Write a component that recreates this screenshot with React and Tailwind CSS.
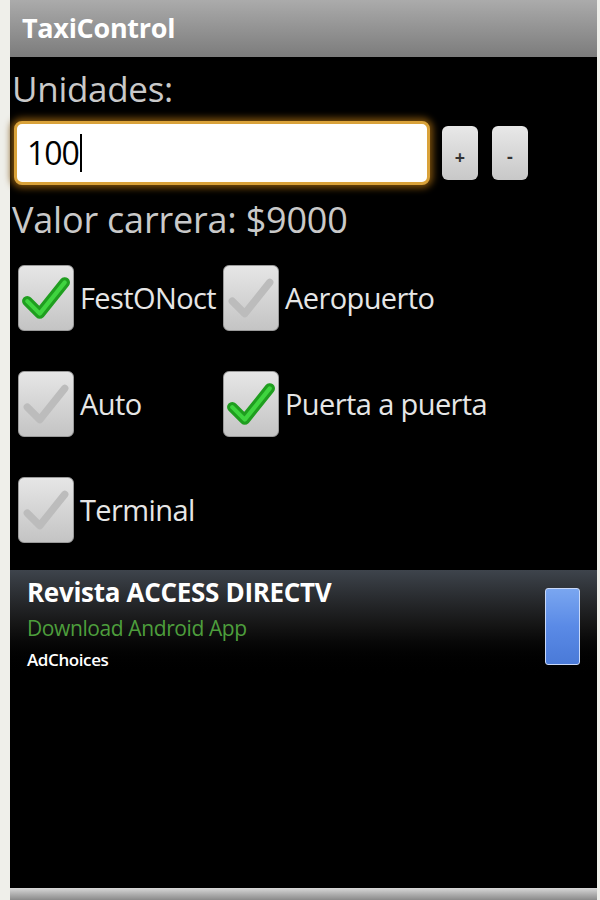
import { useState } from "react";

function Check({ on }) {
  return (
    <div className="w-[56px] h-[66px] rounded-[6px] bg-gradient-to-b from-[#e6e6e6] to-[#c4c4c4] border border-[#9a9a9a] flex items-center justify-center shrink-0">
      <svg width="50" height="46" viewBox="0 0 48 44">
        <path
          d="M6 25 L18 37 L42 7"
          fill="none"
          stroke={on ? "#1f9e1f" : "#bcbcbc"}
          strokeWidth={on ? 10 : 7}
          strokeLinecap="round"
          strokeLinejoin="round"
        />
        {on && (
          <path d="M6 25 L18 37 L42 7" fill="none" stroke="#3fd43f" strokeWidth="4" strokeLinecap="round" strokeLinejoin="round" />
        )}
      </svg>
    </div>
  );
}

function Option({ label, on, width }) {
  return (
    <div className={"flex items-center gap-[6px] " + (width || "")}>
      <Check on={on} />
      <span className="text-[29px] text-[#e6e6e6] tracking-[-0.6px]">{label}</span>
    </div>
  );
}

export default function App() {
  const [units, setUnits] = useState(100);

  return (
    <div className="w-[600px] h-[900px] bg-[#efefea] flex" style={{ fontFamily: '"Open Sans", "Noto Sans", sans-serif' }}>
      <div className="ml-[10px] w-[587px] h-full bg-black flex flex-col">
        {/* Title bar */}
        <div className="h-[57px] bg-gradient-to-b from-[#ababab] to-[#7c7c7c] flex items-center px-[12px] shrink-0">
          <span className="text-[27px] font-bold text-white tracking-[-0.3px]">TaxiControl</span>
        </div>

        <div className="pl-[2px] pt-[10px] text-[35px] text-[#c9c9c9] leading-[44px] tracking-[-0.3px]">Unidades:</div>

        {/* Input row */}
        <div className="flex items-center mt-[10px] pl-[4px]">
          <div className="w-[416px] h-[64px] rounded-[8px] bg-white border-[3px] border-[#d9a23a] shadow-[0_0_7px_3px_#7a4e0c] flex items-center px-[10px]">
            <span className="text-[32px] text-black tracking-[-1px]">{units}</span>
            <span className="w-[2px] h-[38px] bg-black ml-[1px]" />
          </div>
          <button
            onClick={() => setUnits((u) => u + 1)}
            className="ml-[12px] w-[36px] h-[54px] rounded-[6px] bg-gradient-to-b from-[#e8e8e8] to-[#c8c8c8] text-[#333] text-[18px] font-bold flex items-center justify-center pt-[8px]"
          >
            +
          </button>
          <button
            onClick={() => setUnits((u) => u - 1)}
            className="ml-[14px] w-[36px] h-[54px] rounded-[6px] bg-gradient-to-b from-[#e8e8e8] to-[#c8c8c8] text-[#333] text-[18px] font-bold flex items-center justify-center pt-[6px]"
          >
            -
          </button>
        </div>

        <div className="pl-[2px] mt-[12px] text-[36px] text-[#c9c9c9] leading-[46px] tracking-[-0.2px]">Valor carrera: ${units * 90}</div>

        {/* Options */}
        <div className="flex flex-col gap-[40px] mt-[22px] pl-[8px]">
          <div className="flex">
            <Option label="FestONoct" on width="w-[205px]" />
            <Option label="Aeropuerto" />
          </div>
          <div className="flex">
            <Option label="Auto" width="w-[205px]" />
            <Option label="Puerta a puerta" on />
          </div>
          <div className="flex">
            <Option label="Terminal" />
          </div>
        </div>

        {/* Ad banner */}
        <div className="mt-[27px] h-[108px] bg-gradient-to-b from-[#3e444c] via-[#161616] to-black flex items-start pt-[6px] pl-[17px] pr-[17px]">
          <div className="flex-1 flex flex-col">
            <span className="text-[26px] font-bold text-white leading-[32px] tracking-[-0.3px]">Revista ACCESS DIRECTV</span>
            <span className="text-[21px] text-[#4d9e3c] leading-[40px] tracking-[-0.4px]">Download Android App</span>
            <span className="text-[17px] font-semibold text-white leading-[24px] tracking-[-0.4px]">AdChoices</span>
          </div>
          <div className="mt-[12px] w-[35px] h-[77px] rounded-[3px] bg-gradient-to-b from-[#7aa6f0] via-[#5a8ae6] to-[#4a7ad8] border border-[#c8d8f8]" />
        </div>

        <div className="flex-1" />
        <div className="h-[12px] bg-gradient-to-b from-[#d8d8d8] to-[#8a8a8a] shrink-0" />
      </div>
    </div>
  );
}
